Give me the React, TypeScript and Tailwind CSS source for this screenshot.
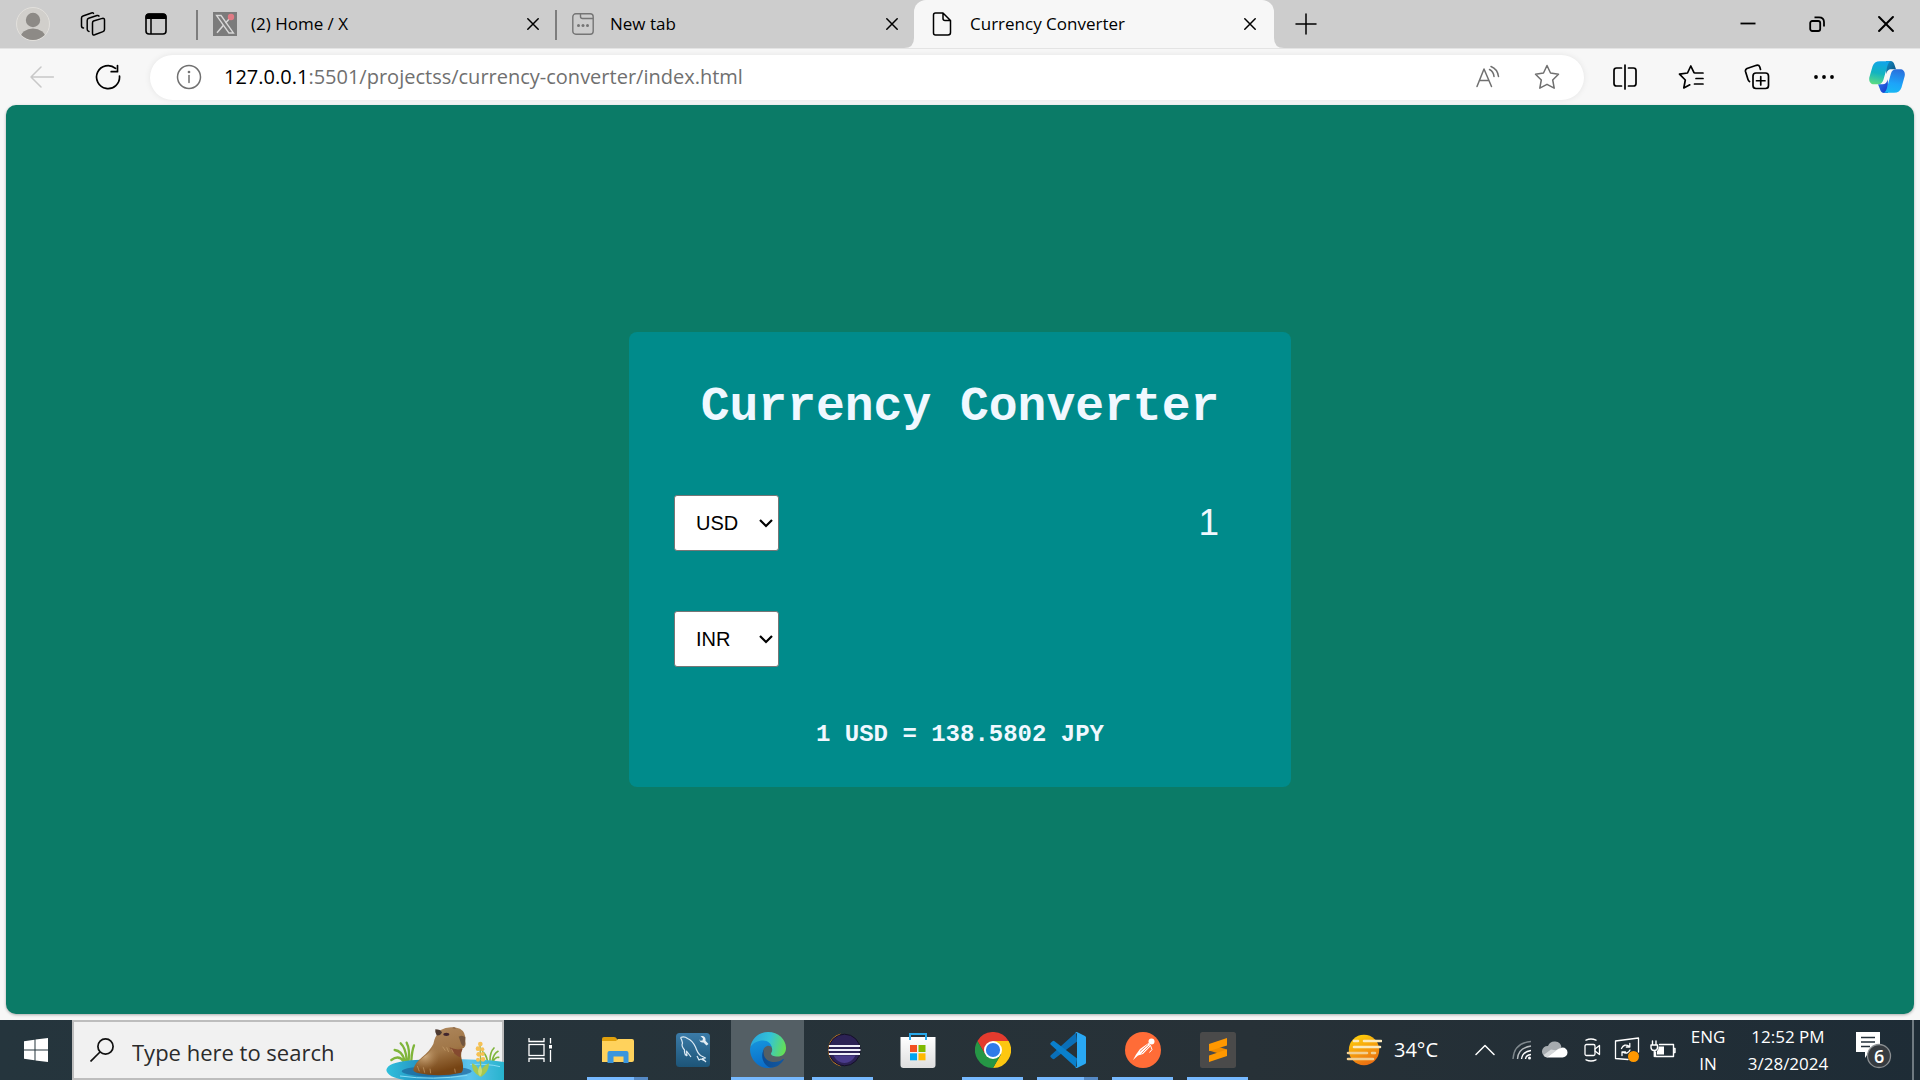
import { useState } from "react";
import type { ReactNode } from "react";

const stroke = { fill: "none", stroke: "currentColor", strokeWidth: 1.5, strokeLinecap: "round", strokeLinejoin: "round" } as const;

function CloseIcon({ size = 12 }: { size?: number }) {
  return (
    <svg width={size} height={size} viewBox="0 0 12 12" {...stroke}>
      <path d="M.8.8l10.4 10.4M11.2.8L.8 11.2" />
    </svg>
  );
}

function Avatar() {
  return (
    <svg width="34" height="34" viewBox="0 0 34 34">
      <defs>
        <clipPath id="avatar-clip"><circle cx="17" cy="17" r="16" /></clipPath>
      </defs>
      <circle cx="17" cy="17" r="16.5" fill="#d1cfcb" stroke="#e2e0dc" />
      <g clipPath="url(#avatar-clip)" fill="#8d8a86">
        <circle cx="17" cy="13" r="7.2" />
        <ellipse cx="17" cy="31" rx="12.5" ry="9.5" />
      </g>
    </svg>
  );
}

function WorkspacesIcon() {
  return (
    <svg width="26" height="26" viewBox="0 0 26 26" {...stroke}>
      <path d="M13.500 10l8.800-2.600q2.200-.5 2.200 1.600v9.500q0 1.500-1.500 2.100l-8.300 3.200q-2.200.7-2.200-1.500V12q0-1.500 1-2z" />
      <path d="M9 20.500q-1.800-.2-1.800-2.200V9.500q0-1.700 1.500-2.200L17 4.500q1.500-.4 2 .6" />
      <path d="M3.500 17q-2-.2-2-2V7Q1.500 5.500 3 5L11.500 2q1.500-.4 2 .4" />
    </svg>
  );
}

function TabActionsIcon() {
  return (
    <svg width="22" height="22" viewBox="0 0 22 22">
      <rect x="1" y="1" width="20" height="20" rx="3" fill="none" stroke="#000" strokeWidth="1.6" />
      <path d="M.5 6V4A3.500 3.500 0 0 1 4 .5h14A3.500 3.500 0 0 1 21.500 4v2z" fill="#000" />
      <path d="M6 6v15" stroke="#000" strokeWidth="1.500" />
    </svg>
  );
}

function XFavicon() {
  return (
    <svg width="24" height="24" viewBox="0 0 24 24">
      <rect width="24" height="24" fill="#7b7b7b" />
      <path d="M3.500 3.500h4.600l12.400 17.500h-4.600z" fill="none" stroke="#d8d8d8" strokeWidth="1.300" />
      <path d="M18.500 4.500l-6 6.600M10.500 13.300L4 20.800" stroke="#d8d8d8" strokeWidth="1.500" />
      <circle cx="18" cy="5" r="3.200" fill="#e07b85" />
    </svg>
  );
}

function NewTabFavicon() {
  return (
    <svg width="22" height="22" viewBox="0 0 22 22" fill="none" stroke="#757575" strokeWidth="1.400">
      <rect x=".8" y=".8" width="20.400" height="20.400" rx="3" />
      <path d="M8.500 1v2.500q0 2 2 2H21" />
      <g fill="#757575" stroke="none"><circle cx="6.500" cy="12.500" r="1.500" /><circle cx="11" cy="12.500" r="1.500" /><circle cx="15.500" cy="12.500" r="1.500" /></g>
    </svg>
  );
}

function FileFavicon() {
  return (
    <svg width="20" height="24" viewBox="0 0 20 24" {...stroke}>
      <path d="M3.500 1h7.500l7.500 7.500v12q0 2.500-2.500 2.500H3.500Q1.500 23 1.500 21V3Q1.500 1 3.500 1zM11 1v5.500q0 2 2 2h5.500" />
    </svg>
  );
}

function CopilotIcon() {
  return (
    <svg width="36" height="32" viewBox="0 0 36 32">
      <defs>
        <linearGradient id="cp-a" x1=".4" y1="0" x2=".2" y2="1"><stop offset="0" stopColor="#12a5e8" /><stop offset=".5" stopColor="#12b4c0" /><stop offset="1" stopColor="#5fdd80" /></linearGradient>
        <linearGradient id="cp-b" x1=".6" y1="0" x2=".4" y2="1"><stop offset="0" stopColor="#2a70dc" /><stop offset=".6" stopColor="#1ca4fa" /><stop offset="1" stopColor="#18b8f4" /></linearGradient>
        <linearGradient id="cp-c" x1="0" y1="0" x2="1" y2="1"><stop offset="0" stopColor="#1590c8" /><stop offset="1" stopColor="#0b4a78" /></linearGradient>
        <linearGradient id="cp-d" x1="0" y1="0" x2="1" y2="1"><stop offset="0" stopColor="#2a7cf0" /><stop offset="1" stopColor="#1436c8" /></linearGradient>
      </defs>
      <path d="M17 0h4.500c2 0 3.300 1.400 3.900 3.400L27 8.300h-4.500c-3.500 0-4.500 2-5.300 5z" fill="url(#cp-c)" />
      <path d="M9 23.300h4.500c3 0 4.500-2 5.300-5L19 32h-4c-2 0-3.300-1.400-3.900-3.400z" fill="url(#cp-d)" />
      <path d="M11 .2h11.500c-2.300 0-3.300 2-4 4.400l-4 14c-1 3.200-2.400 4.700-5.200 4.700H5C1.500 23.300-.3 20.500.3 16.500L3.500 5.500C4.700 2 7 .2 11 .2z" fill="url(#cp-a)" />
      <path d="M25 31.800H13.800c2.300 0 3.200-2 4-4.400l4-14.400c1-3.200 2.400-4.700 5.200-4.700h4c3.500 0 5.400 2.800 4.700 6.800l-3.200 11.400c-1.200 3.500-3.500 5.300-7.500 5.300z" fill="url(#cp-b)" />
    </svg>
  );
}

type TabProps = { icon: ReactNode; title: string; active?: boolean };

function Tab({ icon, title, active }: TabProps) {
  return (
    <div
      className={
        active
          ? "relative flex h-12 w-[360px] shrink items-center rounded-t-xl bg-[#f7f7f7] pl-[18px] pr-[18px]"
          : "relative flex h-12 w-[359px] shrink items-center border-l-2 border-transparent pl-[15px] pr-4 before:absolute before:-left-0.5 before:top-2.5 before:h-[30px] before:w-0.5 before:bg-[#7d7d7d]"
      }
    >
      {active && (
        <>
          <svg className="absolute bottom-0 -left-2.5" width="10" height="10" viewBox="0 0 10 10"><path d="M10 0v10H0Q10 10 10 0z" fill="#f7f7f7" /></svg>
          <svg className="absolute bottom-0 -right-2.5" width="10" height="10" viewBox="0 0 10 10"><path d="M0 0v10h10Q0 10 0 0z" fill="#f7f7f7" /></svg>
        </>
      )}
      <span className="w-[38px] shrink-0">{icon}</span>
      <span className="flex-1 truncate text-[17px] leading-6">{title}</span>
      <button aria-label={`Close ${title}`} className="p-0"><CloseIcon /></button>
    </div>
  );
}

function TabStrip() {
  return (
    <div className="flex h-12 items-center bg-[#cdcdcd]">
      <button aria-label="Profile" className="ml-4"><Avatar /></button>
      <button aria-label="Workspaces" className="ml-[30px]"><WorkspacesIcon /></button>
      <button aria-label="Tab actions" className="ml-[39px] mr-[29px]"><TabActionsIcon /></button>
      <Tab icon={<XFavicon />} title="(2) Home / X" />
      <Tab icon={<NewTabFavicon />} title="New tab" />
      <Tab icon={<FileFavicon />} title="Currency Converter" active />
      <button aria-label="New tab" className="ml-[21px]">
        <svg width="22" height="22" viewBox="0 0 22 22" {...stroke}><path d="M11 1v20M1 11h20" /></svg>
      </button>
      <div className="ml-auto flex h-full">
        <button aria-label="Minimize" className="grid w-[69px] place-items-center">
          <svg width="16" height="16" viewBox="0 0 16 16"><path d="M.5 7.500h15" stroke="#000" strokeWidth="1.800" /></svg>
        </button>
        <button aria-label="Restore" className="grid w-[69px] place-items-center">
          <svg width="16" height="16" viewBox="0 0 16 16" fill="none" stroke="#000" strokeWidth="1.800"><rect x="1.200" y="5" width="10" height="10" rx="2" /><path d="M5.500 1.300H10Q15 1.300 15 6v4.500" /></svg>
        </button>
        <button aria-label="Close window" className="grid w-[69px] place-items-center"><CloseIcon size={16} /></button>
      </div>
    </div>
  );
}

function Toolbar() {
  return (
    <div className="flex h-[57px] items-center border-t border-[#e4e4e4] bg-[#f7f7f7]">
      <button aria-label="Back" className="ml-[30px] text-[#c8c8c8]">
        <svg width="24" height="24" viewBox="0 0 24 24" {...stroke}><path d="M23.500 12H1M11 2L1 12l10 10" /></svg>
      </button>
      <button aria-label="Refresh" className="ml-[41px]">
        <svg width="26" height="26" viewBox="0 0 26 26" {...stroke} strokeWidth="1.700"><path d="M24.500 12A11.500 11.500 0 1 1 20.500 4.300M22.500 1.500v6.200h-6.300" /></svg>
      </button>
      <div className="ml-[29px] flex h-[45px] flex-1 items-center rounded-full bg-white pl-[26px] pr-6 text-[#707070] shadow-[0_0_6px_rgba(0,0,0,0.08)]">
        <button aria-label="Site information">
          <svg width="26" height="26" viewBox="0 0 26 26" {...stroke}><circle cx="13" cy="13" r="11.500" /><path d="M13 11.500v7" /><circle cx="13" cy="8" r=".6" fill="currentColor" /></svg>
        </button>
        <a href="#page" className="ml-[22px] flex-1 truncate text-[20px] leading-7"><span className="text-black">127.0.0.1</span>:5501/projectss/currency-converter/index.html</a>
        <button aria-label="Read aloud">
          <svg width="24" height="24" viewBox="0 0 24 24" {...stroke}><path d="M1 21.500L8 4l7.500 17.500M3.300 15.500h9.500M13.500 4.500q4 2 4.500 7M15 1.500q6.500 2.500 7.500 10" /></svg>
        </button>
        <button aria-label="Add to favorites" className="ml-[34px]">
          <svg width="26" height="26" viewBox="0 0 26 26" {...stroke}><path d="M13 1.500l3.500 7.500 8 1.200-5.800 5.800 1.500 8.200L13 20.300l-7.200 3.900L7.300 16 1.500 10.200 9.500 9z" /></svg>
        </button>
      </div>
      <button aria-label="Split screen" className="ml-7">
        <svg width="26" height="26" viewBox="0 0 26 26" {...stroke} strokeWidth="1.700"><path d="M13 1v24M9.500 4H4.500Q2 4 2 6.500v13Q2 22 4.500 22h5M16.500 4h5Q24 4 24 6.500v13q0 2.500-2.500 2.500h-5" /></svg>
      </button>
      <button aria-label="Favorites" className="ml-10">
        <svg width="26" height="26" viewBox="0 0 26 26" {...stroke} strokeWidth="1.700"><path d="M17 9l-1-.3L12.800 2 9.500 9l-8 1.200L7.300 16l-1.500 8 6-3.200M17 9h8M18 14.500h7M16.500 20H25" /></svg>
      </button>
      <button aria-label="Collections" className="ml-10">
        <svg width="26" height="26" viewBox="0 0 26 26" {...stroke} strokeWidth="1.700"><path d="M5.500 17.500Q4.500 17 4 15.500L1.500 7.500Q1 5.500 3 4.500L12.500 1.300Q15 .8 15.800 3L16.500 5.500" /><rect x="9" y="9" width="15.500" height="15.500" rx="3" /><path d="M16.750 12.500v8.500M12.500 16.750h8.500" /></svg>
      </button>
      <button aria-label="Settings and more" className="ml-11">
        <svg width="20" height="6" viewBox="0 0 20 6"><circle cx="2" cy="3" r="1.900" /><circle cx="10" cy="3" r="1.900" /><circle cx="18" cy="3" r="1.900" /></svg>
      </button>
      <button aria-label="Copilot" className="ml-[35px] mr-[15px]"><CopilotIcon /></button>
    </div>
  );
}

type CurrencyRowProps = { id: string; label: string; currency: string; amount: string };

function CurrencyRow({ id, label, currency, amount }: CurrencyRowProps) {
  const [code, setCode] = useState(currency);
  const [value, setValue] = useState(amount);
  return (
    <div className="flex items-center justify-between">
      <div className="relative">
        <select
          id={`${id}-code`}
          aria-label={`${label} currency`}
          value={code}
          onChange={(e) => setCode(e.target.value)}
          className="block h-14 w-[105px] appearance-none rounded-[3px] border border-[#767676] bg-white pl-[21px] text-[20px] text-black"
        >
          <option>USD</option>
          <option>INR</option>
          <option>JPY</option>
          <option>EUR</option>
        </select>
        <svg className="pointer-events-none absolute right-1.5 top-6" width="14" height="9" viewBox="0 0 14 9" fill="none" stroke="#000" strokeWidth="2.200"><path d="M1 1l6 6 6-6" /></svg>
      </div>
      <input
        id={`${id}-amount`}
        aria-label={`${label} amount`}
        value={value}
        onChange={(e) => setValue(e.target.value)}
        className="h-14 w-64 bg-transparent pr-[27px] text-right text-[37px] outline-none"
      />
    </div>
  );
}

function Converter() {
  return (
    <main id="page" className="mx-1.5 mb-1.5 flex flex-1 items-center justify-center rounded-[10px] bg-[#0b7b67] shadow-[0_1px_3px_rgba(0,0,0,0.3)]">
      <section className="w-[662px] max-w-full rounded-lg bg-[#008b8b] px-[45px] pb-[38px] pt-12 font-['Liberation_Sans',sans-serif] text-[#f0f8ff]">
        <h1 className="text-center font-['Courier_New','Liberation_Mono',monospace] text-[48px] font-bold leading-[54px]">Currency Converter</h1>
        <div className="mt-[61px] flex flex-col gap-[60px]">
          <CurrencyRow id="from" label="From" currency="USD" amount="1" />
          <CurrencyRow id="to" label="To" currency="INR" amount="" />
        </div>
        <p className="mt-[54px] text-center font-['Courier_New','Liberation_Mono',monospace] text-[24px] font-bold leading-7">1 USD = 138.5802 JPY</p>
      </section>
    </main>
  );
}

function Capybara() {
  return (
    <svg className="pointer-events-none absolute -bottom-0.5 -right-0.5" width="118" height="58" viewBox="18 18 354 174">
      <defs>
        <linearGradient id="pond" x1="0" x2="1"><stop offset="0" stopColor="#2fc0dc" /><stop offset=".35" stopColor="#2488bd" /><stop offset=".7" stopColor="#5cc4ee" /><stop offset="1" stopColor="#27b3cd" /></linearGradient>
        <linearGradient id="fur" x1="0" y1="0" x2=".3" y2="1"><stop offset="0" stopColor="#b08a61" /><stop offset=".6" stopColor="#a07647" /><stop offset="1" stopColor="#764414" /></linearGradient>
        <radialGradient id="belly" cx=".35" cy=".4" r=".5"><stop offset="0" stopColor="#d0ad80" /><stop offset="1" stopColor="#a67b4c" stopOpacity="0" /></radialGradient>
      </defs>
      <g fill="none" stroke="#7fb53a" strokeWidth="7" strokeLinecap="round">
        <path d="M74 133Q66 105 44 102M80 133Q78 96 62 82M86 133Q90 100 80 80M94 133Q96 104 102 88M70 135Q56 116 34 132" />
        <path d="M322 133Q318 115 308 108M330 133Q330 108 342 96M337 133Q342 112 354 106M340 134Q348 122 356 124" strokeWidth="5" />
      </g>
      <path d="M19 162Q22 140 92 133Q190 126 288 131Q340 132 372 138V192H74Q22 184 19 162z" fill="url(#pond)" />
      <ellipse cx="170" cy="166" rx="105" ry="16" fill="#1c5f96" opacity=".65" />
      <path d="M60 180Q160 194 262 178M270 146Q320 142 360 152" fill="none" stroke="#86dcf6" strokeWidth="3" />
      <path d="M100 160Q104 142 126 124Q150 104 160 84Q164 60 182 42Q206 28 240 38Q258 48 256 74Q260 94 246 98Q240 118 248 140Q252 164 244 170Q180 184 116 172Q98 168 100 160z" fill="url(#fur)" />
      <path d="M104 160Q104 142 130 124Q158 104 164 84Q200 120 190 170Q140 176 104 160z" fill="url(#belly)" />
      <path d="M208 94Q230 104 248 98Q240 114 240 124Q224 118 208 94z" fill="#84492f" />
      <path d="M166 40Q182 40 186 50Q180 60 170 58Q164 50 166 40z" fill="#4d3a31" />
      <path d="M216 36q8-6 12 2z" fill="#7a5637" />
      <ellipse cx="199" cy="55" rx="9" ry="5" fill="#41262e" />
      <path d="M236 62Q246 56 256 64L254 88Q248 94 244 84z" fill="#72563f" />
      <path d="M188 92l8 12M200 94l6 14M214 98l6 12M112 150l6 16M130 154l4 16M150 158l2 14M224 158l2 12" stroke="#c79f6c" strokeWidth="2" />
      <path d="M300 88Q302 130 302 172" fill="none" stroke="#9bb747" strokeWidth="4" />
      <g fill="#f6c154"><circle cx="301" cy="84" r="7" /><circle cx="294" cy="98" r="7" /><circle cx="307" cy="100" r="6" /><circle cx="296" cy="115" r="7" /><circle cx="308" cy="114" r="6" /><circle cx="294" cy="131" r="6" /><circle cx="309" cy="130" r="7" /></g>
      <path d="M298 180Q274 168 276 142Q296 148 300 178Q304 150 327 142Q326 170 304 182z" fill="#a5c750" />
      <path d="M300 182Q288 164 301 148Q312 166 300 182z" fill="#c8dd72" />
    </svg>
  );
}

function ExplorerIcon() {
  return (
    <svg width="36" height="36" viewBox="0 0 36 36">
      <path d="M2 7q0-2 2-2h10q2 0 3 2l1 2H2z" fill="#e0a00c" />
      <path d="M2 9h14l2-2h14q2 0 2 2v19q0 2-2 2H2z" fill="#ffd25c" />
      <path d="M7.500 31V21q0-2 2-2h17q2 0 2 2v10h-5v-6.500h-10V31z" fill="#3a96dd" />
    </svg>
  );
}

function MysqlIcon() {
  return (
    <svg width="36" height="36" viewBox="0 0 36 36">
      <defs><linearGradient id="my" x1="0" y1="0" x2="0" y2="1"><stop offset="0" stopColor="#3b7ba8" /><stop offset="1" stopColor="#1d5578" /></linearGradient></defs>
      <rect x="1" y="1" width="34" height="34" rx="3.500" fill="url(#my)" />
      <path d="M5.500 5.500q4-1.500 7 1 5 2 8 8.500 2 6 5 8.500l5 2.500-3 .5 3.500 3.500M30 29l-4-2-2 1-2-4M12 24q-3-2-2.500-6Q6 14 7.500 11 7 8 5.500 5.500M12 24l-.5-5 4.500 6M9.500 18.500q0 3 1 5" fill="none" stroke="#dceaf4" strokeWidth="1.200" strokeLinejoin="round" />
      <path d="M25.500 4l2.500 2.500-.5 2-2.200.3L24.500 7q0 4 4 3.500l3 3 2-1.500-3-3.200q.5-3.500-2.500-4.800z" fill="#e4edf3" />
    </svg>
  );
}

function EdgeIcon() {
  return (
    <svg width="36" height="36" viewBox="0 0 36 36">
      <defs>
        <linearGradient id="ed-a" x1="0" y1=".4" x2="1" y2=".6"><stop offset="0" stopColor="#29a6dc" /><stop offset=".5" stopColor="#33c3d8" /><stop offset="1" stopColor="#66e052" /></linearGradient>
        <linearGradient id="ed-b" x1=".3" y1="0" x2=".5" y2="1"><stop offset="0" stopColor="#1593dc" /><stop offset="1" stopColor="#0a6cc8" /></linearGradient>
        <linearGradient id="ed-c" x1="0" x2="1"><stop offset="0" stopColor="#0b4c94" /><stop offset="1" stopColor="#13589f" /></linearGradient>
      </defs>
      <path d="M.3 15C2 6 9 0 18 0c10.500 0 18 7.500 18 16 0 6-4 8.500-8.500 8.500-4 0-6.500-1.200-6.500-2.700 0-1 1.200-1.500 1.200-4.200 0-4-4-7.300-9-7.300C7.500 10.300 3 12.500.3 15z" fill="url(#ed-a)" />
      <path d="M.2 15.500C3 10.500 8 8.500 13 8.500c5 0 8.500 3.500 9 7.500-1-1.800-3-2.700-5-2-4 1.500-5 6-3.500 10.500C15 30 19 34 24 34.800 21 36.300 16 36.500 12 35 4.500 32-1 24 .2 15.500z" fill="url(#ed-b)" />
      <path d="M14.300 17.500c-2 4 .2 11.500 8.200 12.500 4.500.5 8-1 10.500-3 .8-.3 1.200.2.600 1C30 33.500 25 36 20 35.500 12.500 33 10 22.500 14.300 17.500z" fill="url(#ed-c)" />
    </svg>
  );
}

function EclipseIcon() {
  return (
    <svg width="36" height="36" viewBox="1 0 36 36">
      <path d="M17 1.500A17 17 0 0 0 17 34.500 20 20 0 0 1 17 1.500z" fill="#f7941e" />
      <circle cx="20.500" cy="18" r="15.800" fill="#2c2255" stroke="#141026" />
      <path d="M9.500 23.500h22q-4 7.500-11 7.500T9.500 23.500z" fill="#493b8a" />
      <path d="M5 14h31M4.500 18h32M5 22h31" stroke="#eeeef8" strokeWidth="2" />
    </svg>
  );
}

function StoreIcon() {
  return (
    <svg width="36" height="36" viewBox="0 0 36 36">
      <defs><linearGradient id="st" x1="0" y1="0" x2="0" y2="1"><stop offset="0" stopColor="#fff" /><stop offset="1" stopColor="#dedede" /></linearGradient></defs>
      <path d="M.5 5h35v28q0 3-3 3h-29q-3 0-3-3z" fill="url(#st)" />
      <path d="M10 8V2h16v6" fill="none" stroke="#28a8ea" strokeWidth="2" />
      <path d="M10 13h7v7h-7z" fill="#f25022" /><path d="M18.500 13h7v7h-7z" fill="#7fba00" /><path d="M10 21.300h7v7h-7z" fill="#00a4ef" /><path d="M18.500 21.300h7v7h-7z" fill="#ffb900" />
    </svg>
  );
}

function ChromeIcon() {
  return (
    <svg width="36" height="36" viewBox="0 0 36 36">
      <path d="M2.400 9A18 18 0 0 1 33.600 9H18l-7.800 13.500z" fill="#e33b2e" />
      <path d="M33.600 9A18 18 0 0 1 18 36l7.800-13.500L18 9z" fill="#fdc711" />
      <path d="M18 36A18 18 0 0 1 2.400 9l7.800 13.500h15.600z" fill="#259645" />
      <circle cx="18" cy="18" r="9" fill="#fff" />
      <circle cx="18" cy="18" r="7.100" fill="#2f7bea" />
    </svg>
  );
}

function VsCodeIcon() {
  return (
    <svg width="36" height="36" viewBox="0 0 36 36">
      <path d="M26 .5L.8 23.300q-1 1 0 2l1.700 1.500q1 .8 2 0L27 9.500z" fill="#0a6fb8" />
      <path d="M26 35.500L.8 12.700q-1-1 0-2L2.500 9.200q1-.8 2 0L27 26.500z" fill="#0a80cc" />
      <path d="M26 .3q.8-.4 1.500 0L35 4q1 .5 1 1.500v25q0 1-1 1.500l-7.500 3.700q-.7.400-1.500 0l-1-1q2 1 2-1V2.300q0-2-2-1z" fill="#29a8f4" />
    </svg>
  );
}

function PostmanIcon() {
  return (
    <svg width="36" height="36" viewBox="0 0 36 36">
      <circle cx="18" cy="18" r="18" fill="#ff6c37" />
      <circle cx="26.500" cy="9.500" r="3" fill="#fff" />
      <path d="M23.500 11l2.500 2.800-8 8.200-5 1.500-5 4.500 3-5.500 4-5.500z" fill="#fff" />
      <path d="M15 19.500l8-7M16.500 21.500l8-8" fill="none" stroke="#ff6c37" strokeWidth=".8" />
      <path d="M25.500 13.500l1.500 4-2.500 3" fill="none" stroke="#fff" strokeWidth="1" />
    </svg>
  );
}

function SublimeIcon() {
  return (
    <svg width="36" height="36" viewBox="0 0 36 36">
      <rect width="36" height="36" rx="2.500" fill="#4a4a4a" />
      <path d="M9 12v6.500l18 5.500v-6.500z" fill="#f08c00" />
      <path d="M27 6v7.500L9 19v-7z" fill="#ff9800" />
      <path d="M9 23.500V30l18-6v-6.500z" fill="#ff9800" />
    </svg>
  );
}

type AppEntry = { name: string; icon: ReactNode; state?: "active" | "open" | "multi" };

const apps: AppEntry[] = [
  { name: "File Explorer", icon: <ExplorerIcon />, state: "multi" },
  { name: "MySQL Workbench", icon: <MysqlIcon /> },
  { name: "Microsoft Edge", icon: <EdgeIcon />, state: "active" },
  { name: "Eclipse", icon: <EclipseIcon />, state: "open" },
  { name: "Microsoft Store", icon: <StoreIcon /> },
  { name: "Google Chrome", icon: <ChromeIcon />, state: "open" },
  { name: "Visual Studio Code", icon: <VsCodeIcon />, state: "multi" },
  { name: "Postman", icon: <PostmanIcon />, state: "open" },
  { name: "Sublime Text", icon: <SublimeIcon />, state: "open" },
];

function TaskbarApp({ name, icon, state }: AppEntry) {
  return (
    <button
      aria-label={name}
      className={state === "active" ? "relative mx-px grid w-[73px] place-items-center bg-[#545f65]" : "relative mx-px grid w-[73px] place-items-center"}
    >
      {icon}
      {state === "active" && <span className="absolute inset-x-0 bottom-0 h-[3px] bg-[#76b9ff]" />}
      {(state === "open" || state === "multi") && <span className="absolute inset-x-1.5 bottom-0 h-[3px] bg-[#76b9ff]" />}
      {state === "multi" && <span className="absolute bottom-0 right-1.5 h-[3px] w-3.5 bg-[#5589c4]" />}
    </button>
  );
}

function WeatherIcon() {
  return (
    <svg width="36" height="32" viewBox="0 0 36 32">
      <defs><linearGradient id="sun" x1=".3" y1="0" x2=".7" y2="1"><stop offset="0" stopColor="#ffcf0a" /><stop offset="1" stopColor="#ea6a12" /></linearGradient></defs>
      <circle cx="18" cy="16" r="15.200" fill="url(#sun)" />
      <g stroke="#fbe9bd" strokeWidth="2.600" strokeLinecap="round"><path d="M8 7h4M18 7h17M8 13h26" /><path d="M2 19h19M26 19h3M2 25h25" stroke="#f2cf92" /></g>
    </svg>
  );
}

function Tray() {
  return (
    <div className="ml-auto flex items-center text-white">
      <button className="flex items-center gap-3 text-[20px]"><WeatherIcon />34°C</button>
      <button aria-label="Show hidden icons" className="ml-[37px]">
        <svg width="20" height="12" viewBox="0 0 20 12" {...stroke}><path d="M1 10.500l9-9 9 9" /></svg>
      </button>
      <div className="ml-[17px] flex items-center gap-3.5">
        <svg width="20" height="20" viewBox="0 0 20 20" fill="none" stroke="#fff" strokeWidth="1.400"><path d="M1 19Q2 3 19 1.500" stroke="#7f888d" /><path d="M5.500 19Q6 8 19 6" stroke="#b9bec1" /><path d="M9.500 19q1-7.500 9.500-8.500M13.500 19q.5-4 5.500-4.500" /><circle cx="17.500" cy="18" r="1.500" fill="#fff" stroke="none" /></svg>
        <svg width="26" height="24" viewBox="0 0 26 24" className="-ml-1 shrink-0"><path d="M5 19a5.500 5.500 0 0 1 1-11 7 7 0 0 1 13.500 1.500L13 16z" fill="#a6abaf" /><path d="M4.500 19.500L13 13q3.500-3 7.500-3.500a5 5 0 0 1 0 10z" fill="#fff" /><path d="M1.500 17L9 11.500l5.500 1L5 19.500Q2 19 1.500 17z" fill="#d5d8da" /></svg>
        <svg width="20" height="24" viewBox="0 0 20 24" {...stroke} strokeWidth="1.300"><rect x="3" y="6.500" width="10" height="11" rx="1.500" /><path d="M13 11l4.500-3.500v9L13 13M4 2.200q5-2.400 10 0M4 21.800q5 2.400 10 0" /></svg>
        <svg width="26" height="26" viewBox="0 0 26 26" {...stroke} strokeWidth="1.300" className="-ml-0.5 shrink-0"><path d="M14 22.500L1.500 21.500V4L24.500 1v14" /><path d="M7.500 11.500q2.500-5.500 8-2M15.800 6.500v3.500h-3.500M16 13q-2.500 5-7.500 2M8 18.500V15h3.500" /><circle cx="19.500" cy="19.500" r="5.500" fill="#ff9800" stroke="none" /></svg>
        <svg width="26" height="20" viewBox="0 0 26 20" {...stroke} strokeWidth="1.400" className="-ml-1 shrink-0"><path d="M9.500 4.500h14v12h-18V12M23.500 8.500h1.500v4h-1.500M2.500 1v4M6 1v4M1 5h6.500v2.500q0 3-3.200 3T1 7.500zM4.300 10.500V16.500" /><path d="M8.500 6.500h5.500v8H7V11q1.500-1 1.500-3z" fill="#fff" stroke="none" /></svg>
      </div>
      <button className="ml-3 w-10 text-center text-[17px] leading-[27px]">ENG<br />IN</button>
      <button className="ml-4 w-[88px] text-center text-[17px] leading-[27px]">12:52 PM<br />3/28/2024</button>
      <button aria-label="Notifications" className="relative ml-[22px] mr-5">
        <svg width="38" height="44" viewBox="0 0 38 44"><path d="M2 4h24v20h-11l-4 6v-6H2z" fill="#fff" /><path d="M7 9.500h14M7 14h14M7 18.500h9" stroke="#25303a" strokeWidth="1.600" /><circle cx="25" cy="28" r="11.500" fill="#363b40" stroke="#8b8f92" strokeWidth="1.300" /></svg>
        <span className="absolute left-5 top-[17px] text-[18px] font-semibold leading-[22px]">6</span>
      </button>
      <span className="mr-1.5 h-[60px] w-0.5 bg-[#6f7a81]" />
    </div>
  );
}

function Taskbar() {
  return (
    <footer className="flex h-[60px] bg-linear-to-r from-[#25353d] via-[#273137] via-65% to-[#1e2c36]">
      <button aria-label="Start" className="grid w-[72px] place-items-center">
        <svg width="24" height="24" viewBox="0 0 24 24" fill="#fff"><path d="M0 3.300L10.500 1.800v9.700H0zM11.500 1.600L24 0v11.500H11.500zM0 12.500h10.500v9.700L0 20.700zM11.500 12.500H24V24l-12.500-1.600z" /></svg>
      </button>
      <div className="relative flex w-[432px] items-center border-2 border-[#bdbdbd] bg-[#f1f1f1] pl-4">
        <svg width="24" height="24" viewBox="0 0 24 24" fill="none" stroke="#111" strokeWidth="1.700"><circle cx="15.500" cy="8.500" r="7.600" /><path d="M10 14L.5 23.500" /></svg>
        <input aria-label="Search" placeholder="Type here to search" className="ml-[18px] w-[210px] bg-transparent pt-1 text-[22px] outline-none placeholder:text-[#2b2b2b]" />
        <Capybara />
      </div>
      <button aria-label="Task view" className="grid w-[76px] place-items-center pr-1 text-white">
        <svg width="24" height="24" viewBox="0 0 24 24" fill="none" stroke="#fff" strokeWidth="1.300"><rect x="1" y="6.500" width="15" height="11" /><path d="M1 0v3.500h15V0M1 24v-3.500h15V24M22.500 0v5.500M22.500 12v12" /><path d="M21 7h3v3.500h-3z" fill="#fff" stroke="none" /></svg>
      </button>
      {apps.map((app) => <TaskbarApp key={app.name} {...app} />)}
      <Tray />
    </footer>
  );
}

export default function App() {
  return (
    <div className="flex min-h-screen flex-col bg-[#f7f7f7] font-['Open_Sans','Noto_Sans',sans-serif] text-black">
      <TabStrip />
      <Toolbar />
      <Converter />
      <Taskbar />
    </div>
  );
}
